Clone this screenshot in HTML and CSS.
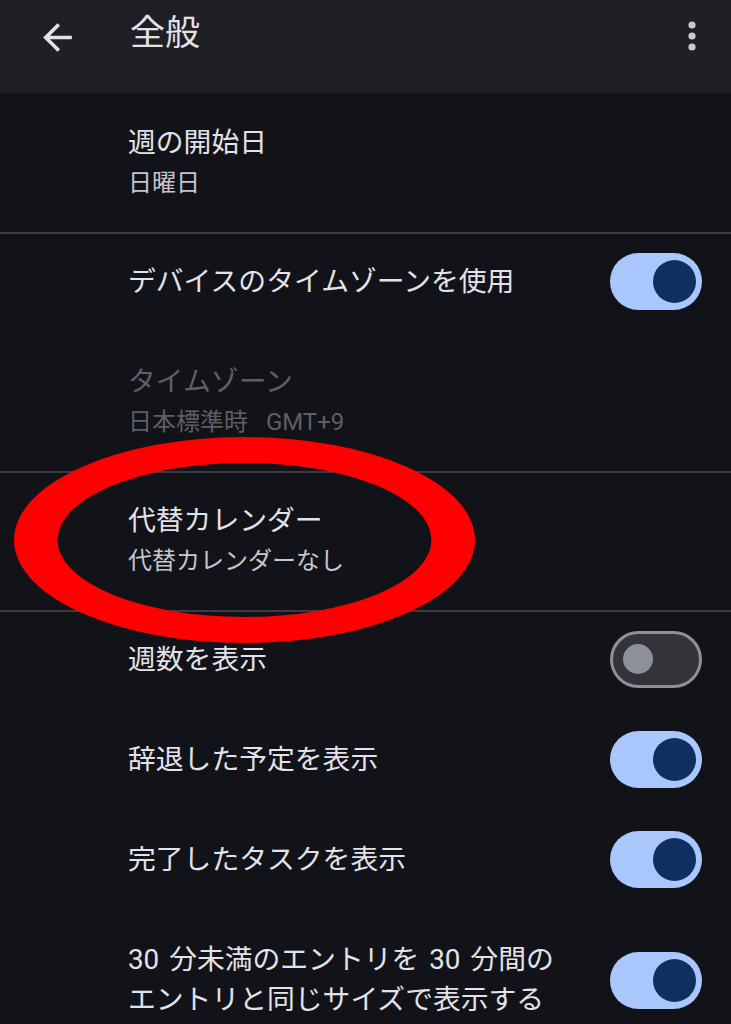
FILE: index.html
```html
<!DOCTYPE html>
<html lang="ja">
<head>
  <meta charset="UTF-8" />
  <meta name="viewport" content="width=device-width, initial-scale=1.0"/>
  <title>全般</title>
  <link rel="stylesheet" href="styles.css">
</head>
<body>
  <header class="app-bar">
    <svg class="back-icon" viewBox="0 0 24 24" width="43" height="43">
      <path d="M20 11H7.83l5.59-5.59L12 4l-8 8 8 8 1.41-1.41L7.83 13H20v-2z" fill="#e3e2e8"/>
    </svg>
    <h1 class="app-title">全般</h1>
    <svg class="more-icon" viewBox="0 0 14 36" width="14" height="36">
      <circle cx="7" cy="7" r="3.6" fill="#c8c9d0"/>
      <circle cx="7" cy="18" r="3.6" fill="#c8c9d0"/>
      <circle cx="7" cy="29" r="3.6" fill="#c8c9d0"/>
    </svg>
  </header>

  <main class="settings">
    <section class="group first">
      <div class="item two-line">
        <div class="item-title">週の開始日</div>
        <div class="item-sub">日曜日</div>
      </div>
    </section>

    <section class="group">
      <div class="item toggle-row">
        <div class="item-title">デバイスのタイムゾーンを使用</div>
        <span class="switch on"><span class="thumb"></span></span>
      </div>
      <div class="item two-line disabled">
        <div class="item-title">タイムゾーン</div>
        <div class="item-sub latin">日本標準時&nbsp; GMT+9</div>
      </div>
    </section>

    <section class="group">
      <div class="item two-line">
        <div class="item-title">代替カレンダー</div>
        <div class="item-sub">代替カレンダーなし</div>
      </div>
    </section>

    <section class="group">
      <div class="item toggle-row">
        <div class="item-title">週数を表示</div>
        <span class="switch"><span class="thumb"></span></span>
      </div>
      <div class="item toggle-row">
        <div class="item-title">辞退した予定を表示</div>
        <span class="switch on"><span class="thumb"></span></span>
      </div>
      <div class="item toggle-row">
        <div class="item-title">完了したタスクを表示</div>
        <span class="switch on"><span class="thumb"></span></span>
      </div>
      <div class="item toggle-row tall">
        <div class="item-title multi latin">30 分未満のエントリを 30 分間の<br>エントリと同じサイズで表示する</div>
        <span class="switch on"><span class="thumb"></span></span>
      </div>
    </section>
  </main>

  <!-- red marker circle drawn over the screenshot -->
  <svg class="marker" viewBox="0 0 731 1024" width="731" height="1024">
    <path fill="#ff0000" fill-rule="evenodd"
      d="M14 540a230.5 103 0 1 0 461 0a230.5 103 0 1 0 -461 0Z
         M57.5 540a187 77 0 1 0 374 0a187 77 0 1 0 -374 0Z"/>
  </svg>
</body>
</html>
```

FILE: styles.css
```css
* { box-sizing: border-box; }

html, body {
  margin: 0;
  padding: 0;
}

body {
  position: relative;
  width: 731px;
  height: 1024px;
  overflow: hidden;
  background: #121318;
  color: #e3e2e8;
  font-family: Roboto, "Noto Sans CJK JP", sans-serif;
}

.app-bar {
  display: flex;
  align-items: flex-start;
  height: 93px;
  padding: 16px 32px 0 36px;
  background: #1f2025;
}

.back-icon {
  flex: none;
}

.app-title {
  margin: 0 0 0 51px;
  font-size: 35px;
  font-weight: 400;
  line-height: 36px;
  color: #e3e2e8;
}

.more-icon {
  margin: 2px 0 0 auto;
}

.group {
  border-top: 2px solid #3b3c41;
}

.group.first {
  border-top: none;
  padding-top: 2px;
}

.item {
  padding: 0 29px 0 128px;
}

.two-line {
  padding-top: 27px;
  padding-bottom: 29px;
}

.item-title {
  font-size: 27.8px;
  line-height: 41px;
  color: #e3e2e8;
}

.item-sub {
  font-size: 24px;
  line-height: 40px;
  color: #c5c6d0;
}

.latin {
  word-spacing: 3px;
}

.disabled .item-title,
.disabled .item-sub {
  color: #5e5f65;
}

.toggle-row {
  display: flex;
  align-items: center;
  justify-content: space-between;
  min-height: 100px;
  padding-bottom: 6px;
}

.toggle-row.tall {
  padding-top: 28px;
  padding-bottom: 34px;
}

.item-title.multi {
  line-height: 40px;
}

.switch {
  flex: none;
  display: flex;
  align-items: center;
  width: 92px;
  height: 57px;
  border-radius: 29px;
  background: #33343a;
  border: 3px solid #8e9099;
  padding-left: 10px;
}

.switch .thumb {
  width: 30px;
  height: 30px;
  border-radius: 50%;
  background: #8e9099;
}

.switch.on {
  background: #a9c7fd;
  border: none;
  justify-content: flex-end;
  padding: 0 6px 0 0;
}

.switch.on .thumb {
  width: 43px;
  height: 43px;
  background: #0e2f5f;
}

.marker {
  position: absolute;
  left: 0;
  top: 0;
  pointer-events: none;
}
```
